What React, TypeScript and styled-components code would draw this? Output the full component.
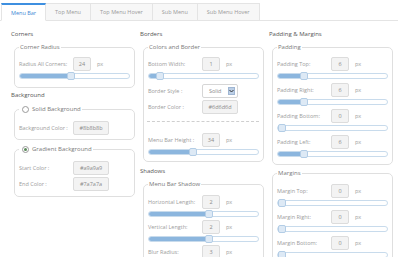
import styled, { createGlobalStyle } from "styled-components";

const GlobalStyle = createGlobalStyle`
  html, body {
    margin: 0;
    padding: 0;
    background: #fff;
  }
  body {
    font-family: "Open Sans", "Liberation Sans", sans-serif;
    width: 400px;
    height: 257px;
    overflow: hidden;
  }
`;

const Page = styled.div`
  width: 400px;
  height: 257px;
  overflow: hidden;
`;

const TabBar = styled.div`
  display: flex;
  align-items: flex-end;
  height: 21px;
  box-sizing: border-box;
  padding: 3px 0 0 1px;
  border-bottom: 1px solid #e4e4e4;
  margin-right: 2px;
`;

const Tab = styled.div<{ $active?: boolean }>`
  box-sizing: border-box;
  padding: 0 9px;
  display: flex;
  align-items: center;
  font-size: 5.5px;
  color: ${(p) => (p.$active ? "#3d88d4" : "#9a9a9a")};
  background: ${(p) => (p.$active ? "#fff" : "#f7f7f7")};
  border: 1px solid #e4e4e4;
  border-left: ${(p) => (p.$active ? "1px solid #e4e4e4" : "none")};
  border-top: ${(p) => (p.$active ? "2px solid #3d8fe0" : "1px solid #e4e4e4")};
  border-bottom: ${(p) => (p.$active ? "1px solid #fff" : "none")};
  margin-bottom: ${(p) => (p.$active ? "-1px" : "0")};
  height: ${(p) => (p.$active ? "18px" : "17px")};
`;

const Columns = styled.div`
  display: flex;
  padding-left: 10px;
`;

const Column = styled.div`
  width: 129px;
  display: flex;
  flex-direction: column;
`;

const Heading = styled.div<{ $mt: number }>`
  font-size: 6px;
  line-height: 10px;
  color: #555;
  margin: ${(p) => p.$mt}px 0 0 1px;
`;

const Group = styled.fieldset<{ $mt: number; $pt: number; $pb: number }>`
  margin: ${(p) => p.$mt}px 4px 0 4px;
  padding: ${(p) => p.$pt}px 4px ${(p) => p.$pb}px 4px;
  border: 1px solid #dfdfdf;
  border-radius: 5px;
  min-width: 0;
`;

const Legend = styled.legend`
  padding: 0 1px;
  font-size: 6px;
  line-height: 8px;
  color: #7a7a7a;
  display: flex;
  align-items: center;
  gap: 3px;
`;

const Radio = styled.span<{ $checked?: boolean }>`
  width: 5px;
  height: 5px;
  border: 1px solid #9a9a9a;
  border-radius: 50%;
  margin-left: 2px;
  display: flex;
  align-items: center;
  justify-content: center;
  &::after {
    content: "";
    width: 3px;
    height: 3px;
    border-radius: 50%;
    background: ${(p) => (p.$checked ? "#5a8a5a" : "transparent")};
  }
`;

const Row = styled.div<{ $mt?: number }>`
  display: flex;
  align-items: center;
  height: 14px;
  margin-top: ${(p) => p.$mt ?? 0}px;
`;

const Label = styled.span`
  width: 54px;
  flex: none;
  font-size: 5.5px;
  color: #9c9c9c;
  white-space: nowrap;
`;

const ValueBox = styled.span<{ $w: number }>`
  width: ${(p) => p.$w}px;
  height: 14px;
  box-sizing: border-box;
  border: 1px solid #dcdcdc;
  border-radius: 2px;
  background: #f3f3f3;
  font-size: 5.5px;
  color: #8a8a8a;
  display: flex;
  align-items: center;
  justify-content: center;
`;

const Unit = styled.span`
  margin-left: 6px;
  font-size: 5.5px;
  color: #9c9c9c;
`;

const SelectBox = styled.span`
  width: 36px;
  height: 14px;
  box-sizing: border-box;
  border: 1px solid #d6d6d6;
  border-radius: 2px;
  background: #fff;
  display: flex;
  align-items: center;
  justify-content: space-between;
  padding: 0 2px 0 6px;
  font-size: 5.5px;
  color: #8a8a8a;
`;

const SelectArrow = styled.span`
  width: 7px;
  height: 8px;
  background: #bccfe6;
  border: 1px solid #9fb6d3;
  box-sizing: border-box;
  display: flex;
  align-items: center;
  justify-content: center;
`;

const Track = styled.div`
  position: relative;
  margin-top: 2px;
  height: 6px;
  box-sizing: border-box;
  border: 1px solid #c8dbec;
  border-radius: 3px;
  background: #fff;
`;

const Fill = styled.div`
  height: 100%;
  background: #8cb6de;
  border-radius: 2px 0 0 2px;
`;

const Handle = styled.div`
  position: absolute;
  top: -2px;
  width: 8px;
  height: 8px;
  margin-left: -4px;
  box-sizing: border-box;
  border: 1px solid #b3cde6;
  border-radius: 2px;
  background: #dde9f5;
`;

const Divider = styled.div`
  border-top: 1px dashed #cfcfcf;
  margin: 7px 0 0 -1px;
`;

type FieldProps = { label: string; value: string; pct: number; mt?: number };

const SliderField = ({ label, value, pct, mt }: FieldProps) => (
  <>
    <Row $mt={mt}>
      <Label>{label}</Label>
      <ValueBox $w={18}>{value}</ValueBox>
      <Unit>px</Unit>
    </Row>
    <Track>
      <Fill style={{ width: `${pct}%` }} />
      <Handle style={{ left: `${Math.max(pct, 3.5)}%` }} />
    </Track>
  </>
);

const ColorField = ({ label, value, mt }: { label: string; value: string; mt?: number }) => (
  <Row $mt={mt}>
    <Label>{label}</Label>
    <ValueBox $w={36}>{value}</ValueBox>
  </Row>
);

const tabs = ["Menu Bar", "Top Menu", "Top Menu Hover", "Sub Menu", "Sub Menu Hover"];

export default function App() {
  return (
    <Page>
      <GlobalStyle />
      <TabBar>
        {tabs.map((t, i) => (
          <Tab key={t} $active={i === 0}>
            {t}
          </Tab>
        ))}
      </TabBar>
      <Columns>
        <Column>
          <Heading $mt={8}>Corners</Heading>
          <Group $mt={4} $pt={6} $pb={8}>
            <Legend>Corner Radius</Legend>
            <SliderField label="Radius All Corners:" value="24" pct={47} />
          </Group>
          <Heading $mt={2}>Background</Heading>
          <Group $mt={5} $pt={8} $pb={4}>
            <Legend>
              <Radio />
              Solid Background
            </Legend>
            <ColorField label="Background Color :" value="#8b8b8b" />
          </Group>
          <Group $mt={5} $pt={8} $pb={5}>
            <Legend>
              <Radio $checked />
              Gradient Background
            </Legend>
            <ColorField label="Start Color :" value="#a9a9a9" />
            <ColorField label="End Color :" value="#7a7a7a" mt={2} />
          </Group>
        </Column>
        <Column>
          <Heading $mt={8}>Borders</Heading>
          <Group $mt={4} $pt={6} $pb={6}>
            <Legend>Colors and Border</Legend>
            <SliderField label="Bottom Width:" value="1" pct={10} />
            <Row $mt={5}>
              <Label>Border Style :</Label>
              <SelectBox>
                Solid
                <SelectArrow>
                  <svg width="5" height="4" viewBox="0 0 5 4">
                    <path d="M0.5 1 L2.5 3 L4.5 1" fill="none" stroke="#333" strokeWidth="1" />
                  </svg>
                </SelectArrow>
              </SelectBox>
            </Row>
            <ColorField label="Border Color :" value="#6d6d6d" mt={2} />
            <Divider />
            <SliderField label="Menu Bar Height :" value="34" pct={40} mt={11} />
          </Group>
          <Heading $mt={4}>Shadows</Heading>
          <Group $mt={4} $pt={7} $pb={6}>
            <Legend>Menu Bar Shadow</Legend>
            <SliderField label="Horizontal Length:" value="2" pct={55} />
            <SliderField label="Vertical Length:" value="2" pct={55} mt={3} />
            <SliderField label="Blur Radius:" value="3" pct={60} mt={3} />
          </Group>
        </Column>
        <Column>
          <Heading $mt={8}>Padding &amp; Margins</Heading>
          <Group $mt={4} $pt={6} $pb={7}>
            <Legend>Padding</Legend>
            <SliderField label="Padding Top:" value="6" pct={24} />
            <SliderField label="Padding Right:" value="6" pct={24} mt={4} />
            <SliderField label="Padding Bottom:" value="0" pct={0} mt={4} />
            <SliderField label="Padding Left:" value="6" pct={24} mt={4} />
          </Group>
          <Group $mt={4} $pt={7} $pb={6}>
            <Legend>Margins</Legend>
            <SliderField label="Margin Top:" value="0" pct={0} />
            <SliderField label="Margin Right:" value="0" pct={0} mt={4} />
            <SliderField label="Margin Bottom:" value="0" pct={0} mt={4} />
          </Group>
        </Column>
      </Columns>
    </Page>
  );
}
